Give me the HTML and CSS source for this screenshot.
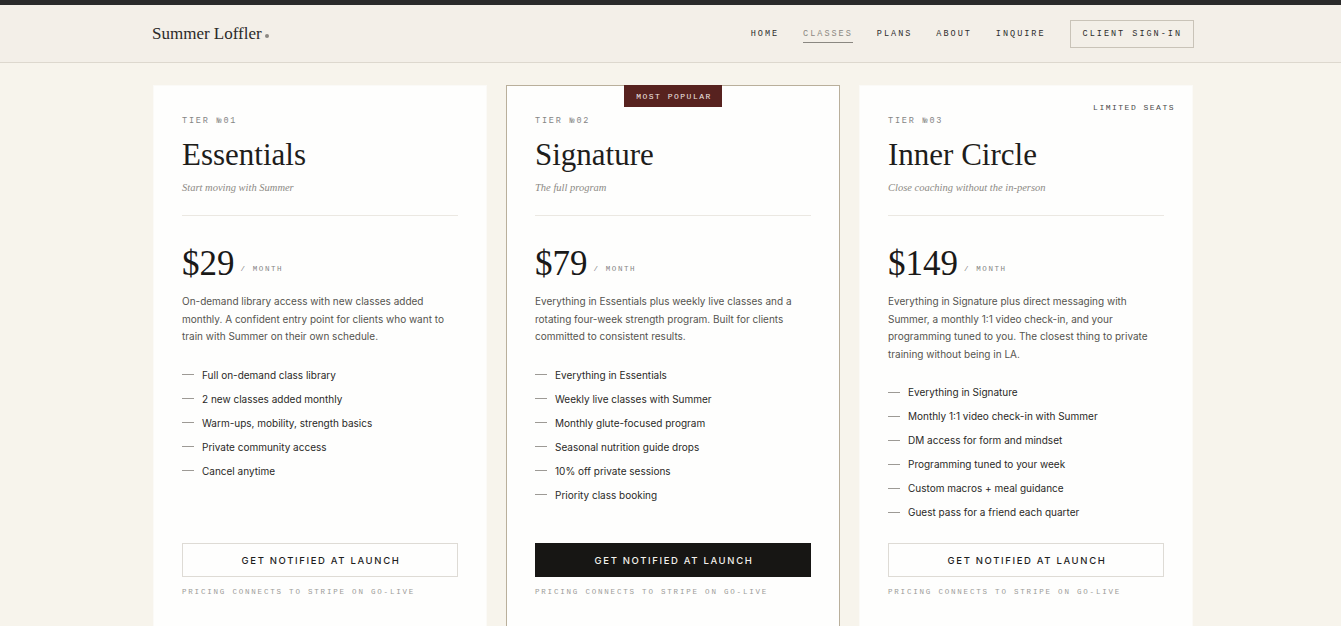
FILE: index.html
```html
<!DOCTYPE html>
<html lang="en">
<head>
<meta charset="utf-8">
<title>Plans — Summer Loffler</title>
<link rel="stylesheet" href="styles.css">
</head>
<body>
<div class="topbar"></div>
<header class="site-header">
  <div class="wrap header-inner">
    <a class="logo" href="#">Summer Loffler<span class="logo-dot"></span></a>
    <nav class="nav">
      <a class="nav-link" href="#">Home</a>
      <a class="nav-link is-active" href="#">Classes</a>
      <a class="nav-link" href="#">Plans</a>
      <a class="nav-link" href="#">About</a>
      <a class="nav-link" href="#">Inquire</a>
      <a class="nav-btn" href="#">Client Sign-in</a>
    </nav>
  </div>
</header>
<main class="wrap plans">
  <section class="card">
    <div class="tier">Tier №01</div>
    <h2 class="title">Essentials</h2>
    <p class="subtitle">Start moving with Summer</p>
    <hr class="rule">
    <div class="price"><span class="amount">$29</span><span class="per">/ Month</span></div>
    <p class="desc">On-demand library access with new classes added monthly. A confident entry point for clients who want to train with Summer on their own schedule.</p>
    <ul class="features">
      <li>Full on-demand class library</li>
      <li>2 new classes added monthly</li>
      <li>Warm-ups, mobility, strength basics</li>
      <li>Private community access</li>
      <li>Cancel anytime</li>
    </ul>
    <div class="cta">
      <a class="btn" href="#">Get notified at launch</a>
      <p class="note">Pricing connects to Stripe on go-live</p>
    </div>
  </section>
  <section class="card card-featured">
    <div class="badge">Most Popular</div>
    <div class="tier">Tier №02</div>
    <h2 class="title">Signature</h2>
    <p class="subtitle">The full program</p>
    <hr class="rule">
    <div class="price"><span class="amount">$79</span><span class="per">/ Month</span></div>
    <p class="desc">Everything in Essentials plus weekly live classes and a rotating four-week strength program. Built for clients committed to consistent results.</p>
    <ul class="features">
      <li>Everything in Essentials</li>
      <li>Weekly live classes with Summer</li>
      <li>Monthly glute-focused program</li>
      <li>Seasonal nutrition guide drops</li>
      <li>10% off private sessions</li>
      <li>Priority class booking</li>
    </ul>
    <div class="cta">
      <a class="btn btn-dark" href="#">Get notified at launch</a>
      <p class="note">Pricing connects to Stripe on go-live</p>
    </div>
  </section>
  <section class="card">
    <div class="flag">Limited Seats</div>
    <div class="tier">Tier №03</div>
    <h2 class="title">Inner Circle</h2>
    <p class="subtitle">Close coaching without the in-person</p>
    <hr class="rule">
    <div class="price"><span class="amount">$149</span><span class="per">/ Month</span></div>
    <p class="desc">Everything in Signature plus direct messaging with Summer, a monthly 1:1 video check-in, and your programming tuned to you. The closest thing to private training without being in LA.</p>
    <ul class="features">
      <li>Everything in Signature</li>
      <li>Monthly 1:1 video check-in with Summer</li>
      <li>DM access for form and mindset</li>
      <li>Programming tuned to your week</li>
      <li>Custom macros + meal guidance</li>
      <li>Guest pass for a friend each quarter</li>
    </ul>
    <div class="cta">
      <a class="btn" href="#">Get notified at launch</a>
      <p class="note">Pricing connects to Stripe on go-live</p>
    </div>
  </section>
</main>
</body>
</html>
```
FILE: styles.css
```css
* { box-sizing: border-box; }
html, body { margin: 0; padding: 0; }
body {
  background: #f7f4ec;
  font-family: "Inter", "Liberation Sans", sans-serif;
  color: #222;
  overflow: hidden;
}
a { text-decoration: none; color: inherit; }

.topbar { height: 5px; background: #2a2a2a; }

.wrap { width: 1042px; margin-left: 152px; }

.site-header {
  background: #f3efe8;
  border-bottom: 1px solid #ddd8ce;
}
.header-inner {
  height: 57px;
  display: flex;
  align-items: center;
  justify-content: space-between;
}
.logo {
  font-family: "Liberation Serif", serif;
  font-size: 17px;
  color: #2b2a28;
  display: flex;
  align-items: baseline;
}
.logo-dot {
  width: 4px; height: 4px; border-radius: 50%;
  background: #8c8882;
  margin-left: 3px;
  position: relative;
  top: -1px;
}
.nav { display: flex; align-items: center; gap: 24px; }
.nav-link, .nav-btn {
  font-family: "Liberation Mono", monospace;
  font-size: 8.5px;
  letter-spacing: 2px;
  text-transform: uppercase;
  color: #2d2d2d;
}
.nav-link.is-active {
  color: #8a8781;
  padding-bottom: 3px;
  border-bottom: 1px solid #8a8781;
  margin-top: 4px;
}
.nav-btn {
  border: 1px solid #c9c3b8;
  height: 28px;
  display: flex;
  align-items: center;
  padding: 0 11px 0 12px;
}

.plans {
  padding: 22px 1px 0;
  display: grid;
  grid-template-columns: repeat(3, 334px);
  gap: 19px;
}
.card {
  position: relative;
  background: #fefefd;
  border: 1px solid #fbfaf7;
  padding: 29px 28px 28px;
  display: flex;
  flex-direction: column;
}
.card-featured { border-color: #b9af9b; }

.badge {
  position: absolute;
  top: -1px;
  left: 50%;
  transform: translateX(-50%);
  height: 22px;
  width: 98px;
  background: #57221f;
  color: #f1e6e2;
  font-family: "Liberation Mono", monospace;
  font-size: 8px;
  letter-spacing: 1.5px;
  text-transform: uppercase;
  display: flex;
  align-items: center;
  justify-content: center;
  padding-left: 2px;
}
.flag {
  position: absolute;
  top: 17px;
  right: 17px;
  font-family: "Liberation Mono", monospace;
  font-size: 8px;
  letter-spacing: 1.5px;
  text-transform: uppercase;
  color: #4a4a4a;
}

.tier {
  font-family: "Liberation Mono", monospace;
  font-size: 8.5px;
  line-height: 12px;
  letter-spacing: 1.8px;
  text-transform: uppercase;
  color: #858585;
}
.title {
  margin: 11px 0 0;
  font-family: "Liberation Serif", serif;
  font-weight: 400;
  font-size: 31px;
  line-height: 34px;
  color: #1e1d1b;
}
.subtitle {
  margin: 8px 0 0;
  font-family: "Liberation Serif", serif;
  font-style: italic;
  font-size: 10.5px;
  line-height: 16px;
  color: #8d8a85;
}
.rule {
  margin: 19px 0 0;
  border: 0;
  height: 1px;
  background: #ebe8e2;
}
.price {
  margin-top: 31px;
  display: flex;
  align-items: baseline;
  gap: 6px;
  height: 34px;
}
.amount {
  font-family: "Liberation Serif", serif;
  font-size: 35px;
  line-height: 34px;
  color: #1a1918;
}
.per {
  font-family: "Liberation Mono", monospace;
  font-size: 7.5px;
  letter-spacing: 1.6px;
  text-transform: uppercase;
  color: #858585;
  position: relative;
  top: -4px;
}
.desc {
  margin: 12px 0 0;
  font-size: 10px;
  line-height: 17.5px;
  color: #55544f;
}
.features {
  list-style: none;
  margin: 17px 0 0;
  padding: 0;
}
.features li {
  display: flex;
  align-items: center;
  gap: 8px;
  font-size: 10px;
  line-height: 24px;
  color: #2a2927;
}
.features li::before {
  content: "";
  width: 12px;
  height: 1px;
  background: #9d9a95;
  flex: none;
}
.cta { margin-top: auto; padding-top: 19px; }
.btn {
  display: flex;
  align-items: center;
  justify-content: center;
  height: 34px;
  border: 1px solid #dedbd5;
  font-size: 9.5px;
  font-weight: 500;
  letter-spacing: 1.65px;
  text-transform: uppercase;
  color: #1e1e1e;
  padding-left: 2px;
}
.btn-dark {
  background: #171614;
  border-color: #171614;
  color: #f3f1ec;
}
.note {
  margin: 9px 0 0;
  font-family: "Liberation Mono", monospace;
  font-size: 7.5px;
  line-height: 12px;
  letter-spacing: 1.8px;
  text-transform: uppercase;
  color: #9c9b98;
}
```
